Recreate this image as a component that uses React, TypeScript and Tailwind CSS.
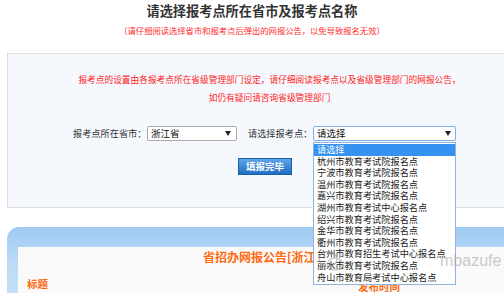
import React from 'react';

const options = [
  '请选择',
  '杭州市教育考试院报名点',
  '宁波市教育考试院报名点',
  '温州市教育考试院报名点',
  '嘉兴市教育考试院报名点',
  '湖州市教育考试中心报名点',
  '绍兴市教育考试院报名点',
  '金华市教育考试院报名点',
  '衢州市教育考试院报名点',
  '台州市教育招生考试中心报名点',
  '丽水市教育考试院报名点',
  '舟山市教育局考试中心报名点',
];

const Arrow: React.FC = () => (
  <svg width="6" height="5" viewBox="0 0 6 5" className="shrink-0">
    <path d="M0 0h6L3 5z" fill="#222" />
  </svg>
);

const App: React.FC = () => {
  return (
    <div
      className="relative w-[504px] h-[293px] overflow-hidden bg-white"
      style={{ fontFamily: '"Noto Sans CJK SC", "Noto Sans", sans-serif' }}
    >
      {/* heading */}
      <div className="pt-[2px] text-center text-[13.2px] leading-[17px] font-semibold text-[#333]">
        请选择报考点所在省市及报考点名称
      </div>
      <div className="mt-[6px] text-center text-[8.3px] leading-[11px] text-[#ff2a2a]">
        （请仔细阅读选择省市和报考点后弹出的网报公告，以免导致报名无效）
      </div>

      {/* form box */}
      <div className="mt-[17px] ml-[7px] h-[155px] border-y border-l border-dotted border-[#c8c8c8] bg-[#f5f9fe]">
        <div className="pt-[17px] pl-[63px] text-center w-[460px] text-[8.7px] leading-[18px] text-[#ff2020]">
          <div>报考点的设置由各报考点所在省级管理部门设定，请仔细阅读报考点以及省级管理部门的网报公告，</div>
          <div>如仍有疑问请咨询省级管理部门</div>
        </div>

        <div className="mt-[19px] flex items-center text-[9.2px] text-[#333]">
          <span className="ml-[65px] w-[74px]">报考点所在省市：</span>
          <div className="flex h-[15px] w-[90px] items-center justify-between rounded-[2px] border border-[#a9a9a9] bg-white pl-[3px] pr-[5px] text-[9.5px] text-[#111]">
            <span>浙江省</span>
            <Arrow />
          </div>
          <span className="ml-[11px] w-[65px]">请选择报考点：</span>
          <div className="relative">
            <div className="flex h-[15px] w-[143px] items-center justify-between rounded-[2px] border border-[#7fb0e6] bg-white pl-[3px] pr-[4px] text-[9.5px] text-[#111]">
              <span>请选择</span>
              <Arrow />
            </div>
            {/* open dropdown list */}
            <div className="absolute left-0 top-[16px] z-10 w-[143px] border border-[#8fb3dd] bg-white py-[1px]">
              {options.map((o, i) => (
                <div
                  key={o}
                  className={
                    i === 0
                      ? 'h-[11.6px] pl-[3px] text-[9.2px] leading-[11.6px] bg-[#3592f0] text-white'
                      : 'h-[11.6px] pl-[3px] text-[9.2px] leading-[11.6px] text-[#222]'
                  }
                >
                  {o}
                </div>
              ))}
            </div>
          </div>
        </div>

        <div className="mt-[17px] ml-[230px] flex h-[17px] w-[54px] items-center justify-center border border-[#1d5fa5] bg-gradient-to-b from-[#5fa4e6] to-[#1e6ec1] text-[9.5px] font-bold text-white">
          填报完毕
        </div>
      </div>

      {/* notice panel */}
      <div className="mt-[19px] ml-[7px] h-[80px] rounded-tl-[12px] bg-gradient-to-b from-[#9fcaf2] via-[#bddcf7] to-[#c8e2f8] pl-[11px] pt-[20px]">
        <div className="h-full bg-[#fafafa]">
          <div className="pt-[2px] pl-[185px] text-[12px] leading-[16px] font-bold text-[#ff6a10]">
            省招办网报公告[浙江省]
          </div>
          <div className="mt-[12px] flex text-[10.5px] font-bold leading-[13px] text-[#ff6a10]">
            <span className="ml-[9px]">标题</span>
            <span className="ml-[310px] mt-[3px]">发布时间</span>
          </div>
        </div>
      </div>

      {/* watermark */}
      <div className="pointer-events-none absolute left-[318px] top-[250px] z-20 flex items-center opacity-60">
        <svg width="26" height="22" viewBox="0 0 26 22">
          <ellipse cx="10" cy="9" rx="9" ry="7.5" fill="none" stroke="#999" strokeWidth="1.2" />
          <ellipse cx="17" cy="14" rx="7.5" ry="6" fill="none" stroke="#999" strokeWidth="1.2" />
        </svg>
        <span className="ml-[96px] text-[16px] leading-[16px] text-[#a8a8a8]" style={{ fontFamily: '"Liberation Sans", sans-serif' }}>
          mbazufe
        </span>
      </div>
    </div>
  );
};

export default App;
